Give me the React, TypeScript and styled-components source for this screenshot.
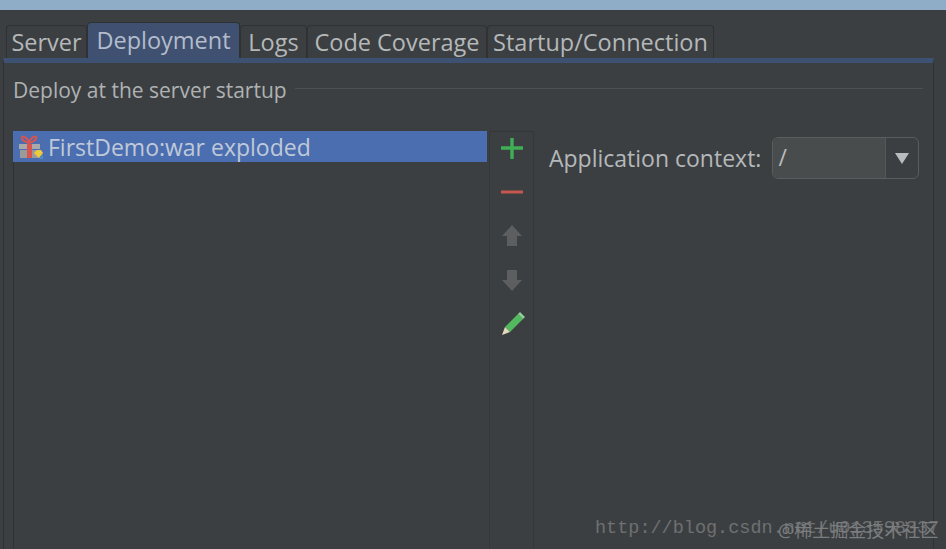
import styled, { createGlobalStyle } from 'styled-components';

const GlobalStyle = createGlobalStyle`
  html, body {
    margin: 0;
    padding: 0;
    background: #3c3f41;
  }
`;

const Page = styled.div`
  position: relative;
  width: 946px;
  height: 549px;
  overflow: hidden;
  display: flex;
  flex-direction: column;
  background: #3c3f41;
  color: #b4b8ba;
  font-family: 'Open Sans', 'Noto Sans', sans-serif;
`;

const TitleStrip = styled.div`
  height: 10px;
  flex: none;
  background: #8fadc6;
`;

const TabBar = styled.div`
  display: flex;
  align-items: flex-end;
  height: 48px;
  flex: none;
  padding-left: 6px;
`;

const Tab = styled.div<{ $active?: boolean; $width: number }>`
  box-sizing: border-box;
  width: ${(p) => p.$width}px;
  height: ${(p) => (p.$active ? 37 : 33)}px;
  padding-top: ${(p) => (p.$active ? 1 : 0)}px;
  margin-bottom: ${(p) => (p.$active ? -1 : 0)}px;
  text-align: center;
  font-size: 23.5px;
  line-height: 33px;
  border: 1px solid #2f3132;
  border-bottom: none;
  border-radius: 4px 4px 0 0;
  background: ${(p) => (p.$active ? '#3f5070' : '#3c3f41')};
  color: ${(p) => (p.$active ? '#b3bccb' : '#b4b8ba')};
`;

const Panel = styled.div`
  box-sizing: border-box;
  flex: 1;
  width: 931px;
  margin-left: 3px;
  display: flex;
  flex-direction: column;
  border-left: 1px solid #2f3132;
  border-right: 1px solid #2f3132;
  border-top: 5px solid #3d5273;
  padding: 0 10px 0 9px;
`;

const SectionTitle = styled.div`
  display: flex;
  align-items: center;
  gap: 8px;
  height: 50px;
  padding-top: 3px;
  box-sizing: border-box;
  font-size: 21px;
  white-space: nowrap;
  color: #aeb2b4;
`;

const Rule = styled.div`
  flex: 1;
  height: 1px;
  margin-top: -3px;
  background: #4d5052;
`;

const Body = styled.div`
  flex: 1;
  display: flex;
  margin-top: 18px;
`;

const DeployList = styled.div`
  width: 474px;
  flex: none;
  border-left: 1px solid #2f3132;
  box-sizing: border-box;
`;

const DeployRow = styled.div`
  height: 31px;
  margin-left: -1px;
  display: flex;
  align-items: center;
  gap: 5px;
  padding-left: 4px;
  background: #4a6eb0;
  color: #c0c9d8;
  font-size: 23px;
  white-space: nowrap;
`;

const Toolbar = styled.div`
  box-sizing: border-box;
  width: 45px;
  margin-left: 2px;
  flex: none;
  display: flex;
  flex-direction: column;
  align-items: center;
  gap: 14px;
  padding-top: 1px;
  border: 1px solid #343637;
  border-bottom: none;
  border-radius: 2px 2px 0 0;
`;

const ToolIcon = styled.svg`
  display: block;
  width: 30px;
  height: 30px;
`;

const ContextRow = styled.div`
  display: flex;
  align-items: center;
  height: 42px;
  margin: 6px 0 0 15px;
  gap: 11px;
  font-size: 23px;
  white-space: nowrap;
`;

const Combo = styled.div`
  box-sizing: border-box;
  width: 147px;
  height: 42px;
  display: flex;
  border: 1px solid #5a5d5f;
  border-radius: 6px;
  overflow: hidden;
`;

const ComboValue = styled.div`
  flex: 1;
  padding-left: 5px;
  line-height: 38px;
  font-size: 23px;
  background: #484c4d;
  color: #b8bcbe;
`;

const ComboArrow = styled.div`
  width: 32px;
  display: flex;
  align-items: center;
  justify-content: center;
  border-left: 1px solid #55585a;
`;

const Watermark = styled.div`
  position: absolute;
  left: 595px;
  top: 518px;
  font-family: 'Liberation Mono', monospace;
  font-size: 18.5px;
  line-height: 22px;
  white-space: nowrap;
  color: #6e7072;
`;

const WatermarkOver = styled.div`
  position: absolute;
  left: 778px;
  top: 518px;
  font-family: 'Open Sans', 'Noto Sans CJK SC', sans-serif;
  font-size: 18px;
  line-height: 24px;
  white-space: nowrap;
  color: #7b7d7f;
`;

const GiftIcon = () => (
  <svg width="26" height="26" viewBox="0 0 26 26">
    <rect x="2" y="10" width="21" height="5" fill="#a9a9a9" />
    <rect x="3" y="16" width="19" height="8" fill="#9a9a9a" />
    <rect x="10" y="10" width="5" height="14" fill="#d9534f" />
    <path d="M12 9C8 8 4 6 5 3c2-2 6 2 7 6c1-4 5-8 7-6c1 3-3 5-7 6z" fill="none" stroke="#d9534f" strokeWidth="2" />
    <path d="M17 19l3-3h4l2 3-4 5z" fill="#f0c93c" />
    <path d="M22 25l4-5v5z" fill="#4d8fc4" />
  </svg>
);

const App = () => (
  <Page>
    <GlobalStyle />
    <TitleStrip />
    <TabBar>
      <Tab $width={81}>Server</Tab>
      <Tab $width={153} $active>Deployment</Tab>
      <Tab $width={67}>Logs</Tab>
      <Tab $width={180}>Code Coverage</Tab>
      <Tab $width={227}>Startup/Connection</Tab>
    </TabBar>
    <Panel>
      <SectionTitle>
        Deploy at the server startup
        <Rule />
      </SectionTitle>
      <Body>
        <DeployList>
          <DeployRow>
            <GiftIcon />
            FirstDemo:war exploded
          </DeployRow>
        </DeployList>
        <Toolbar>
          <ToolIcon viewBox="0 0 30 30">
            <path d="M15 5v21M4 15h22" stroke="#3fae56" strokeWidth="3.4" />
          </ToolIcon>
          <ToolIcon viewBox="0 0 30 30">
            <path d="M4 15h22" stroke="#c7574e" strokeWidth="3" />
          </ToolIcon>
          <ToolIcon viewBox="0 0 30 30">
            <path d="M15 4l10 11h-5v10h-10V15H5z" fill="#5c5e60" />
          </ToolIcon>
          <ToolIcon viewBox="0 0 30 30">
            <path d="M15 26L5 15h5V5h10v10h5z" fill="#5c5e60" />
          </ToolIcon>
          <ToolIcon viewBox="0 0 30 30">
            <path d="M8 18L21 5l5 5-13 13z" fill="#52b95e" />
            <path d="M21 5l2-2 5 5-2 2z" fill="#8fcf97" />
            <path d="M8 18l5 5-8 3z" fill="#e4d8bd" />
          </ToolIcon>
        </Toolbar>
        <ContextRow>
          Application context:
          <Combo>
            <ComboValue>/</ComboValue>
            <ComboArrow>
              <svg width="14" height="12" viewBox="0 0 14 12">
                <path d="M0 1h14L7 12z" fill="#b9bcbe" />
              </svg>
            </ComboArrow>
          </Combo>
        </ContextRow>
      </Body>
    </Panel>
    <Watermark>http://blog.csdn.net/u013598337</Watermark>
    <WatermarkOver>@稀土掘金技术社区</WatermarkOver>
  </Page>
);

export default App;
